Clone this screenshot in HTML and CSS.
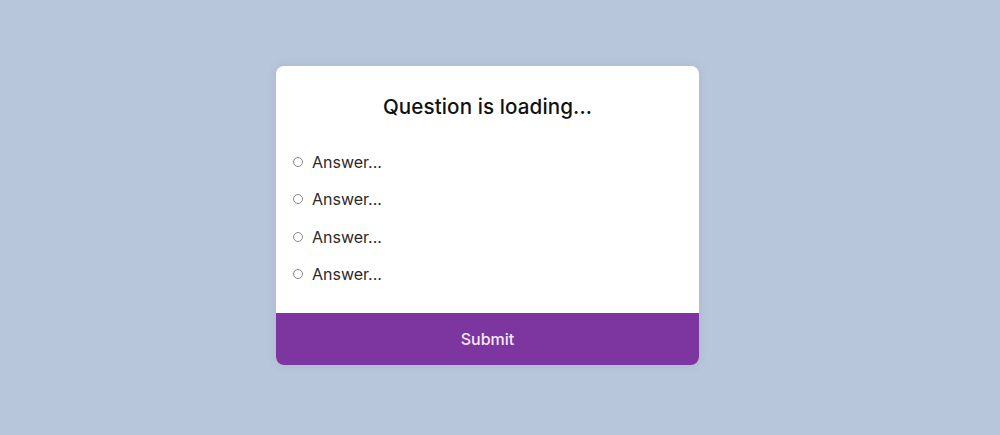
FILE: index.html
```html
<!DOCTYPE html>
<html lang="en">
<head>
<meta charset="utf-8">
<title>Quiz</title>
<link rel="stylesheet" href="styles.css">
</head>
<body>
<div class="quiz">
  <div class="quiz-header">
    <h2 class="question">Question is loading...</h2>
    <ul class="answers">
      <li class="answer"><span class="radio"></span><span class="label">Answer...</span></li>
      <li class="answer"><span class="radio"></span><span class="label">Answer...</span></li>
      <li class="answer"><span class="radio"></span><span class="label">Answer...</span></li>
      <li class="answer"><span class="radio"></span><span class="label">Answer...</span></li>
    </ul>
  </div>
  <button class="submit">Submit</button>
</div>
</body>
</html>
```

FILE: styles.css
```css
html, body {
  margin: 0;
  padding: 0;
}
body {
  background: #b8c6db;
  height: 435px;
  font-family: Inter, "Open Sans", sans-serif;
  padding-top: 66px;
  box-sizing: border-box;
}
.quiz {
  margin-left: 276px;
  width: 423px;
  background: #fff;
  border-radius: 8px;
  box-shadow: 0 0 8px 1px rgba(100, 100, 110, 0.12);
  overflow: hidden;
}
.quiz-header {
  padding: 26px 0 20px 0;
}
.question {
  margin: 0;
  text-align: center;
  font-size: 20.6px;
  letter-spacing: 0.1px;
  line-height: 30px;
  font-weight: 500;
  color: #111;
}
.answers {
  list-style: none;
  margin: 21px 0 0 0;
  padding: 0 0 0 17px;
}
.answer {
  display: flex;
  align-items: center;
  height: 37.5px;
}
.radio {
  width: 8px;
  height: 8px;
  border: 1px solid #8a8a8a;
  border-radius: 50%;
  margin-right: 9px;
  flex: none;
}
.label {
  font-size: 16px;
  color: #2a2a2a;
}
.submit {
  display: block;
  width: 100%;
  height: 52px;
  border: none;
  background: #7d35a0;
  color: #f4eaf8;
  font-family: Inter, "Open Sans", sans-serif;
  font-size: 16px;
  font-weight: 500;
  margin: 0;
  padding: 0;
}
```
